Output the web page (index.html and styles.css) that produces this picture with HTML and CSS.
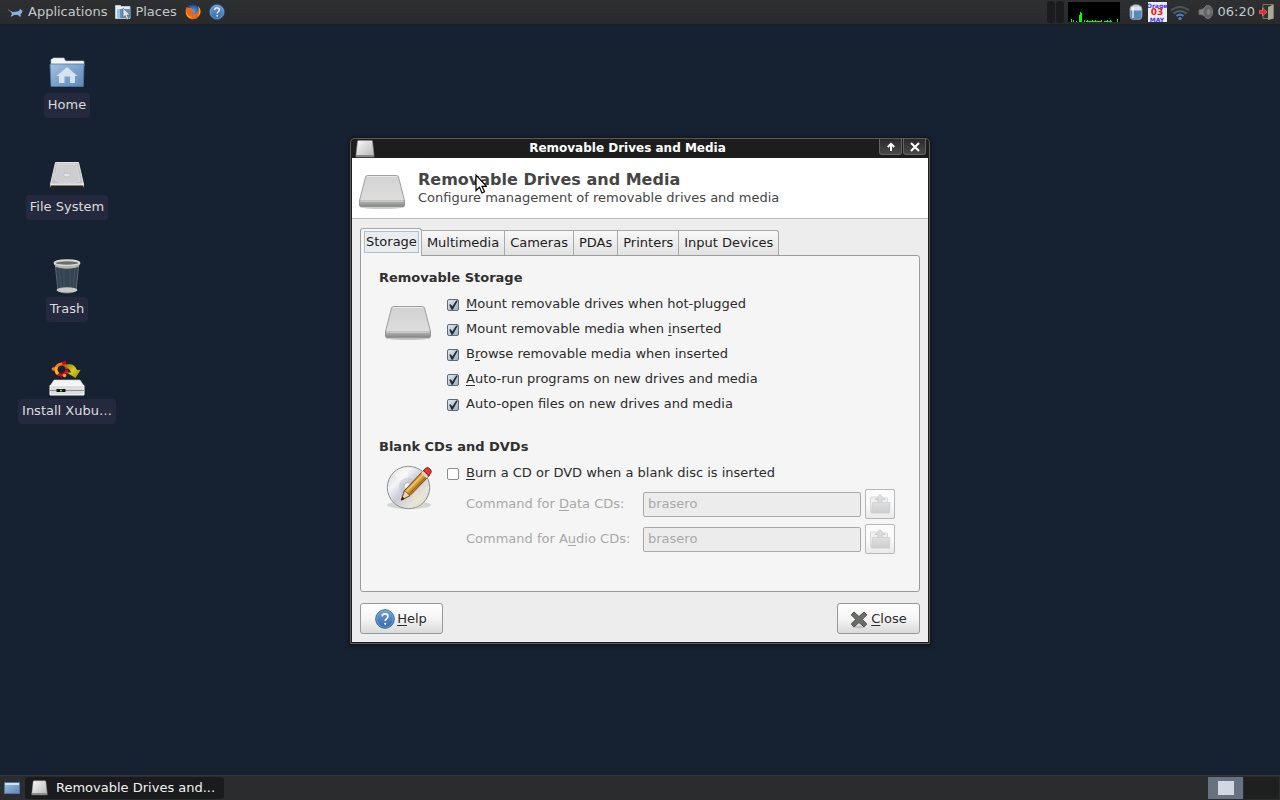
FILE: index.html
```
<!DOCTYPE html>
<html lang="en">
<head>
<meta charset="utf-8">
<title>Removable Drives and Media</title>
<link rel="stylesheet" href="styles.css">
</head>
<body>
<svg class="defs" aria-hidden="true">
  <defs>
    <linearGradient id="blue" x2="0" y2="1"><stop stop-color="#6fa3d6"/><stop offset="1" stop-color="#2f69a6"/></linearGradient>
    <linearGradient id="folder" x2="1" y2="1"><stop stop-color="#a6c4e0"/><stop offset=".5" stop-color="#7ba3cd"/><stop offset="1" stop-color="#5f88b5"/></linearGradient>
    <linearGradient id="metal" x2="0" y2="1"><stop stop-color="#d2d2d2"/><stop offset="1" stop-color="#e0e0e0"/></linearGradient>
    <linearGradient id="lip" x2="0" y2="1"><stop stop-color="#b9bab8"/><stop offset="1" stop-color="#858784"/></linearGradient>
    <linearGradient id="shine" x2="1" y2="1"><stop stop-color="#fafafa"/><stop offset="1" stop-color="#b5b5b5"/></linearGradient>
    <linearGradient id="disc" x2="1" y2="1"><stop stop-color="#c9cacc"/><stop offset=".3" stop-color="#f4f4f6"/><stop offset=".5" stop-color="#c9c9d8"/><stop offset=".75" stop-color="#e6e6dc"/><stop offset="1" stop-color="#c4c4c8"/></linearGradient>
    <linearGradient id="grey" x2="0" y2="1"><stop stop-color="#dedfe0"/><stop offset="1" stop-color="#cccecf"/></linearGradient>
    <linearGradient id="yellow" x2="1" y2="1"><stop stop-color="#7d7305"/><stop offset=".5" stop-color="#d9c91c"/><stop offset="1" stop-color="#998b08"/></linearGradient>
    <radialGradient id="fox"><stop stop-color="#5ba9e6"/><stop offset="1" stop-color="#17479a"/></radialGradient>
    <symbol id="drive" viewBox="0 0 48 38">
      <ellipse cx="24" cy="34" rx="22" ry="2" fill="#000" opacity=".2"/>
      <path d="M9.500 2.500h29q1.500 0 2 1.500l6 23.500v4.500q0 1.500-1.500 1.500H3q-1.500 0-1.500-1.500v-4.500L7.500 4q.5-1.500 2-1.500z" fill="url(#metal)" stroke="#a0a19f"/>
      <path d="M1.500 27.500h45v4.500q0 1.500-1.500 1.500H3q-1.500 0-1.500-1.500z" fill="url(#lip)" stroke="#8f918e" stroke-width=".6"/>
      <path d="M9 3.500h30M2.500 28h43" stroke="#eeeeee" stroke-width=".8"/>
    </symbol>
    <symbol id="minidrive" viewBox="0 0 20 18">
      <path d="M2.500 1.500Q2.500.5 3.500.5h13q1 0 1 1L19 15v2H1v-2z" fill="url(#shine)" stroke="#8b8b8b" stroke-width=".6"/>
      <path d="M1 15h18v2H1z" fill="#858683"/>
    </symbol>
    <symbol id="help" viewBox="0 0 20 20">
      <circle cx="10" cy="10" r="9.300" fill="url(#blue)" stroke="#34659a"/>
      <circle cx="10" cy="10" r="8.300" fill="none" stroke="#86b1db" stroke-width=".6"/>
      <path d="M7 7.300C7.200 5.500 8.400 4.900 10 4.900c1.800 0 3 .9 3 2.400 0 2.200-2.800 2.300-2.800 4.700" fill="none" stroke="#fff" stroke-width="1.600"/>
      <circle cx="10.200" cy="14.800" r="1.100" fill="#fff"/>
    </symbol>
    <symbol id="openfolder" viewBox="0 0 22 22">
      <path d="M1.500 19V5q0-1 1-1h5l1 1h9q1 0 1 1v13z" fill="#f0f0f0" stroke="#d9d9d9"/>
      <path d="M11 1.500l5 5h-3v4H9v-4H6z" fill="#dcdddc" stroke="#c4c5c4" stroke-width=".8"/>
      <path d="M3.500 9.500h17.500l-.5 10.500H2.500z" fill="url(#grey)" stroke="#cbcdce" stroke-width=".8"/>
    </symbol>
  </defs>
</svg>

<header class="panel panel-top">
  <nav class="menus">
    <button class="menu"><svg class="i16" viewBox="0 0 16 16"><path d="M2 6.500l3 1.500 4-.5 2.500-1 .5-2 1.200 1.500 1.300.5-.5 2.500-1.500 1 .5 2.500h-1.500L10 11H6l-2 1.500H2.500L4 10 3 8.500z" fill="#88aee2"/><path d="M0 5.500l4 3" stroke="#5d7ba8"/></svg>Applications</button>
    <button class="menu"><svg class="i16" viewBox="0 0 16 16"><path d="M.5 14.500V1.500h5l1 1h8.500v12z" fill="#e5edf3" stroke="#bdc8d0"/><path d="M2.500 14V5H15v9z" fill="#5c93c2"/><path d="M3 5h2v9H3z" fill="#9cc2e1"/><path d="M8 4v9.500l2.200-2 1.500 4 2-.8-1.600-3.700h3z" fill="#e4e4e4" stroke="#555" stroke-width=".6"/></svg>Places</button>
    <button class="menu" aria-label="Web browser"><svg class="i16" viewBox="0 0 16 16"><circle cx="8" cy="7.500" r="7" fill="url(#fox)"/><path d="M1.500 3Q0 6 .7 9.500C2 14 5.500 15.500 8.500 15.300c4-.3 7-3.600 7-7.500 0-2.500-1-4.300-2.500-5.600.8 2.500.6 6-2 7.300-2 1-4 .5-5-.8l2.500-.7 1-1.500-2.500-1-.5-1.500L3.500 4z" fill="#e96b17"/><path d="M13 2.200c2 3 2.200 7-.5 9.800 2.800-1.500 3.500-5 2.200-7.500zM1 7c1 4 3 6 6 6.500-3 1-6-2-6-6.500z" fill="#ffc42e"/></svg></button>
    <button class="menu" aria-label="Help"><svg class="i16"><use href="#help"/></svg></button>
  </nav>
  <div class="tray">
    <span class="handles"><i></i><i></i></span>
    <svg class="graph" viewBox="0 0 52 20"><path d="M0 0h52v20H0z" fill="#000"/><path d="M3.500 20v-3M5.500 20v-2M8.500 20v-1M11.500 20v-7M12.500 20V10M13.500 20v-9M16.500 20v-2M19.500 20v-2M21.500 20v-1M24.500 20v-2M27.500 20v-2M30.500 20v-1M33.500 20v-2M36.500 20v-1M39.500 20v-2M42.500 20v-2M49.500 20v-3M18 19.500h16M36 19.500h8" stroke="#0f0"/></svg>
    <svg class="i16 battery" viewBox="0 0 16 16"><rect x="2" y="1.500" width="12" height="14" rx="3.500" fill="#d9e2ea" stroke="#7f8b96" stroke-width=".8"/><path d="M2.500 6.500h11V12q0 3-3 3h-5q-3 0-3-3z" fill="#5787bd"/><path d="M4 3.500h2V14H4z" fill="#fff" opacity=".6"/><rect x="5" y=".5" width="6" height="2" rx="1" fill="#b9c3ca"/></svg>
    <span class="calendar"><b>Orage</b><strong>03</strong><b>MAY</b></span>
    <svg class="wifi" viewBox="0 0 20 20"><g fill="none" stroke-width="2"><path d="M1 8.500q9-7 18 0" stroke="#4b5359"/><path d="M3.500 11.500q6.500-5 13 0" stroke="#4d6277"/><path d="M6.500 14q3.500-2.800 7 0" stroke="#4b7fb5"/></g><circle cx="10" cy="16.500" r="1.600" fill="#4b8bca"/></svg>
    <svg class="i16 speaker" viewBox="0 0 16 16"><path d="M1 6l4-1 4-3.500 1 13-5-3.500-4-.5z" fill="#85878a" stroke="#66696b"/><ellipse cx="10" cy="8" rx="4.500" ry="6.500" fill="#606264" stroke="#7d7f81"/><ellipse cx="10.500" cy="8" rx="2" ry="3" fill="#808284"/></svg>
    <time>06:20</time>
    <button class="menu" aria-label="Quit"><svg class="i16" viewBox="0 0 16 16"><path d="M4 .5h10v14H4z" fill="#31312d" stroke="#77766c"/><path d="M9 3l5.500-2.500v14L9 16z" fill="#aaa998"/><path d="M.5 6.500h3V4L8 8l-4.500 4V9.500h-3z" fill="#e02929" stroke="#f88" stroke-width=".6"/></svg></button>
  </div>
</header>

<main class="desktop">
  <nav class="shortcuts">
    <a class="shortcut" href="#home"><svg class="picture" viewBox="0 0 36 36"><path d="M2 10V5q0-1 1-1h1V3h11l1.500 3H34q1 0 1 1v4z" fill="#f5f5f3" stroke="#c8cbcc" stroke-width=".6"/><path d="M1 9h34l-.7 22.500H2z" fill="url(#folder)" stroke="#5379a3" stroke-width=".8"/><path d="M18 12l10.500 9H26v7h-5v-6.500h-5.500V28H10v-7H7.500z" fill="#d6e2ed"/></svg><span>Home</span></a>
    <a class="shortcut" href="#filesystem"><svg class="picture" viewBox="0 0 36 36"><path d="M6.500 5.500h23L34.500 27v3H1.500v-3z" fill="#c5c5c5" stroke="#eee" stroke-width=".9"/><path d="M9 7h18l1.500 6 2.500 11q-7 3-16 2Q5 25 5 19q1-3 3-5-1-3 1-7z" fill="#cecece" stroke="#e0e0e0" stroke-width=".7"/><ellipse cx="18" cy="18" rx="3.500" ry="2" fill="#e4e4e4" stroke="#b4b4b4" stroke-width=".7"/><path d="M1.500 26.500h33v2h-33z" fill="#e4e4e4"/><path d="M1.500 28.500h33V31q0 1-1 1h-31q-1 0-1-1z" fill="#222"/></svg><span>File System</span></a>
    <a class="shortcut" href="#trash"><svg class="picture" viewBox="0 0 36 36"><path d="M6 4h24l-3 28q-9 4.500-18 0z" fill="#354453" stroke="#6d7880" stroke-width=".7"/><path d="M10 8l2 22M15 9v22M21 9v22M26 8l-2 22" stroke="#425260"/><ellipse cx="18" cy="31" rx="10.500" ry="2.800" fill="#c8cac6"/><ellipse cx="18" cy="4" rx="12.500" ry="2.800" fill="#6c6e6b" stroke="#d9dad6" stroke-width="2"/><path d="M6 5.500l.5 2.500q11.500 3.500 23 0l.5-2.500q-12 4-24 0z" fill="#b4b6b1"/></svg><span>Trash</span></a>
    <a class="shortcut" href="#install"><svg class="picture" viewBox="0 0 36 36"><g fill="none" stroke-width="3"><path d="M7 8a5.500 5.500 0 0 1 6-5" stroke="#f47b12"/><path d="M13 3a5.500 5.500 0 0 1 5 5" stroke="#df2c1b"/><path d="M18 9a6 6 0 0 1-11 2" stroke="#d30d16"/><path d="M7 6q-1 4 2 7" stroke="#ffb414"/></g><circle cx="4.500" cy="8" r="1.800" fill="#f47b12"/><circle cx="15.500" cy="1.800" r="1.800" fill="#d01"/><circle cx="15.500" cy="14.500" r="1.800" fill="#f9a51a"/><path d="M14 5q10-5.500 14 4h3.500L26.500 17l-9-5.500H22Q20 6 14 5z" fill="url(#yellow)"/><path d="M5 19h26l4 6H1z" fill="#f4f4f4" stroke="#ccc" stroke-width=".6"/><path d="M1 24.500h34V34H1z" fill="#dcdddf" stroke="#fafafa"/><path d="M1 29.500h34" stroke="#777" stroke-width=".8"/><path d="M7.500 28h9v3h-9z" fill="#141414"/><circle cx="12" cy="29.500" r="1" fill="#7f3"/></svg><span>Install Xubu…</span></a>
  </nav>

  <section class="window" aria-label="Removable Drives and Media">
    <div class="titlebar">
      <svg class="title-icon"><use href="#minidrive"/></svg>
      <h1>Removable Drives and Media</h1>
      <div class="controls">
        <button aria-label="Shade"><svg viewBox="0 0 12 12"><path d="M6 10V3.500M2.800 6L6 2.800 9.200 6" fill="none" stroke="#fff" stroke-width="2"/></svg></button>
        <button aria-label="Close window"><svg viewBox="0 0 12 12"><path d="M2 2l8 8M10 2l-8 8" stroke="#fff" stroke-width="2"/></svg></button>
      </div>
    </div>
    <div class="banner">
      <svg class="drive"><use href="#drive"/></svg>
      <div class="banner-text"><h2>Removable Drives and Media</h2><p>Configure management of removable drives and media</p></div>
      <svg class="pointer" viewBox="0 0 12 20"><path d="M1 1v15.500l3.500-3.300L7 19l2.500-1.200L7 12.300h4.500z" fill="#fff" stroke="#000" stroke-width="1.200"/></svg>
    </div>
    <div class="content">
      <div class="tabs" role="tablist">
        <button class="tab active" role="tab" aria-selected="true"><span>Storage</span></button>
        <button class="tab" role="tab">Multimedia</button>
        <button class="tab" role="tab">Cameras</button>
        <button class="tab" role="tab">PDAs</button>
        <button class="tab" role="tab">Printers</button>
        <button class="tab" role="tab">Input Devices</button>
      </div>
      <form class="page">
        <h3>Removable Storage</h3>
        <div class="group">
          <svg class="drive"><use href="#drive"/></svg>
          <div class="options">
            <label class="option"><input type="checkbox" checked><span><u>M</u>ount removable drives when hot-plugged</span></label>
            <label class="option"><input type="checkbox" checked><span>Mount removable media when <u>i</u>nserted</span></label>
            <label class="option"><input type="checkbox" checked><span>B<u>r</u>owse removable media when inserted</span></label>
            <label class="option"><input type="checkbox" checked><span><u>A</u>uto-run programs on new drives and media</span></label>
            <label class="option"><input type="checkbox" checked><span>Auto-open files on new drives and media</span></label>
          </div>
        </div>
        <h3>Blank CDs and DVDs</h3>
        <div class="group">
          <svg class="burn" viewBox="0 0 48 48"><ellipse cx="24" cy="41" rx="22" ry="4" fill="#000" opacity=".13"/><circle cx="23.500" cy="23.500" r="21.200" fill="url(#disc)" stroke="#8b8d90"/><path d="M23 23L8 10q6-7 15-7z" fill="#fff" opacity=".45"/><path d="M24 24l18 8q-4 9-12 12z" fill="#e8e6c5" opacity=".5"/><circle cx="23" cy="22.500" r="9" fill="#b8b8cb" opacity=".45"/><circle cx="23" cy="22.500" r="4" fill="#f5f5f5" stroke="#aaa" stroke-width=".8"/><path d="M16.500 36l3-9.500L39 6l5.500 5.500L25 31.500z" fill="#d69a35" stroke="#6b4410"/><path d="M21 28L40 8.500" stroke="#f5c673" stroke-width="1.500"/><path d="M23.500 30.500L43 11" stroke="#99641b" stroke-width="1.300"/><path d="M16.500 36l3-9.500 5.500 5z" fill="#ead7ae" stroke="#6b4410" stroke-width=".8"/><path d="M16 36.500l1.200-4 2.700 2.500z" fill="#222"/><path d="M37 8l5.500 5.500" stroke="#d3d3d3" stroke-width="2.500"/><path d="M38.500 6.500l2.200-2.300q2-1.500 4.300.8t.7 4.300l-2 2.200z" fill="#e33636" stroke="#9d1717"/></svg>
          <div class="options">
            <label class="option"><input type="checkbox"><span><u>B</u>urn a CD or DVD when a blank disc is inserted</span></label>
            <div class="command"><label for="data">Command for <u>D</u>ata CDs:</label><input id="data" type="text" value="brasero" disabled><button type="button" disabled aria-label="Browse for data CD command"><svg><use href="#openfolder"/></svg></button></div>
            <div class="command"><label for="audio">Command for A<u>u</u>dio CDs:</label><input id="audio" type="text" value="brasero" disabled><button type="button" disabled aria-label="Browse for audio CD command"><svg><use href="#openfolder"/></svg></button></div>
          </div>
        </div>
      </form>
      <div class="actions">
        <button class="action"><svg><use href="#help"/></svg><span><u>H</u>elp</span></button>
        <button class="action"><svg viewBox="0 0 20 20"><ellipse cx="10" cy="18" rx="7" ry="1.500" opacity=".15"/><path d="M5 3l5 4.500L15 3l2.800 2.800-4.600 4.700 4.600 4.500-2.800 2.800-5-4.300-5 4.300L2.200 15l4.600-4.500-4.600-4.700z" fill="#6b6d6a" stroke="#4c4e4b" stroke-linejoin="round"/></svg><span><u>C</u>lose</span></button>
      </div>
    </div>
  </section>
</main>

<footer class="panel panel-bottom">
  <button class="show-desktop" aria-label="Show desktop"><svg viewBox="0 0 16 12"><path d="M.5.500h15v11H.5z" fill="url(#folder)" stroke="#4f78a6"/><path d="M1 1h14v2H1z" fill="#d2e0ed"/></svg></button>
  <button class="task"><svg><use href="#minidrive"/></svg>Removable Drives and...</button>
  <div class="pager"><button class="workspace current" aria-label="Workspace 1"><i></i></button><button class="workspace" aria-label="Workspace 2"></button></div>
</footer>
</body>
</html>
```
FILE: styles.css
```
* { box-sizing: border-box; }
body {
  margin: 0;
  min-height: 100vh;
  display: flex;
  flex-direction: column;
  background: #162232;
  color: #2b2b2b;
  font: 13px/16px "DejaVu Sans", sans-serif;
}
h1, h2, h3, p { margin: 0; }
button { font: inherit; color: inherit; margin: 0; padding: 0; border: 0; background: none; }
svg { display: block; flex: none; }
u { text-underline-offset: 2px; text-decoration-thickness: 1px; text-decoration-skip-ink: none; }
.defs { position: absolute; width: 0; height: 0; }
.i16 { width: 16px; height: 16px; }

.panel { display: flex; align-items: center; color: #c3c8cb; }
.panel-top {
  height: 25px;
  justify-content: space-between;
  padding: 0 5px 0 8px;
  background: linear-gradient(#2e2f30, #292a2b);
  border-bottom: 1px solid #1c1f22;
}
.menus, .tray { display: flex; align-items: center; }
.menus { gap: 8px; }
.menu { display: flex; align-items: center; gap: 4px; }
.handles { display: flex; gap: 1px; margin-right: 4px; }
.handles i { width: 8px; height: 22px; border-radius: 3px; background: #1b1c1d; }
.graph { width: 52px; height: 20px; margin-right: 8px; }
.battery { margin-right: 4px; }
.calendar {
  width: 19px;
  height: 20px;
  display: flex;
  flex-direction: column;
  align-items: center;
  justify-content: center;
  overflow: hidden;
  background: #efefef;
  color: #3838f0;
  font-size: 6px;
  line-height: 5px;
  margin-right: 3px;
}
.calendar strong { color: #f01818; font-size: 9px; line-height: 9px; }
.wifi { width: 20px; height: 20px; margin-right: 8px; }
.speaker { margin-right: 4px; }
.tray time { margin-right: 4px; }

.desktop {
  flex: 1;
  display: grid;
  grid-template-columns: 134px 1fr 134px;
  align-items: start;
}
.shortcuts { display: flex; flex-direction: column; gap: 38px; padding-top: 30px; }
.shortcut {
  height: 64px;
  display: flex;
  flex-direction: column;
  align-items: center;
  gap: 2px;
  color: #dcdcdc;
  text-decoration: none;
}
.picture { width: 36px; height: 36px; }
.shortcut span { padding: 4px 4px 5px; border-radius: 4px; background: #25293d; line-height: 16px; }

.window {
  justify-self: center;
  width: 100%;
  max-width: 580px;
  margin-top: 113px;
  padding: 0 1px 1px;
  background: #1d1d1d;
  border: 1px solid #5c5c58;
  border-radius: 4px 4px 0 0;
  outline: 1px solid #171717;
  box-shadow: 0 1px 4px 1px rgb(0 0 0 / 40%);
}
.titlebar {
  height: 19px;
  display: grid;
  grid-template-columns: 27px 1fr 52px;
  align-items: center;
  color: #fff;
}
.title-icon { width: 20px; height: 18px; margin-left: 3px; }
.titlebar h1 { padding-bottom: 2px; font-size: 12px; line-height: 16px; text-align: center; }
.controls { display: flex; gap: 1px; align-self: start; justify-content: end; padding-right: 2px; }
.controls button {
  width: 23px;
  height: 16px;
  display: grid;
  place-items: center;
  border: 1px solid #636363;
  border-top: 0;
  border-radius: 0 0 3px 3px;
  background: linear-gradient(#2b2b2b, #484848);
}
.controls svg { width: 12px; height: 12px; }
.banner {
  position: relative;
  display: flex;
  align-items: center;
  gap: 12px;
  height: 61px;
  padding: 8px 6px 0;
  background: #fff;
  border-bottom: 1px solid #bcbcbc;
  color: #454545;
}
.drive { width: 48px; height: 38px; }
.banner-text { align-self: start; padding-top: 4px; }
.banner h2 { font-size: 16px; line-height: 20px; }
.banner p { line-height: 16px; }
.pointer { position: absolute; left: 123px; top: 16px; width: 12px; height: 20px; }
.content { padding: 9px 8px 8px; background: #ededed; }

.tabs { display: flex; align-items: flex-end; }
.tab {
  height: 25px;
  padding: 0 5px;
  border: 1px solid #a9a9a9;
  border-left: 0;
  border-bottom: 0;
  background: linear-gradient(#f8f8f8, #e2e2e2);
  color: #1c1c1c;
}
.tab:last-child { border-radius: 0 3px 0 0; }
.tab.active {
  height: 28px;
  margin-bottom: -1px;
  padding: 0 2px 1px 3px;
  border-left: 1px solid #9b9b9b;
  border-radius: 3px 3px 0 0;
  background: #f5f5f5;
  z-index: 1;
}
.tab span { display: block; padding: 2px 1px; border: 1px solid #b0bfcc; background: #eaedef; }
.page {
  display: block;
  min-height: 337px;
  padding: 14px 24px 0 18px;
  border: 1px solid #9b9b9b;
  border-radius: 0 3px 3px 3px;
  background: #f5f5f5;
}
.page h3 { font-size: 13px; line-height: 16px; color: #303030; }
.group { display: flex; align-items: flex-start; padding: 6px 0 0 5px; }
.group .drive { margin: 12px 15px 0 0; }
.group .burn { width: 48px; height: 48px; margin: 3px 14px 0 1px; }
.options { flex: 1; }
.group + h3 { margin-top: 22px; }
.option { display: flex; align-items: center; gap: 7px; height: 25px; }
.option span { padding-bottom: 2px; }
.option input {
  appearance: none;
  width: 12px;
  height: 12px;
  margin: 1px 0 0;
  display: grid;
  border: 1px solid #8c8c8c;
  border-radius: 2px;
  background: #fff;
}
.option input:checked { border-color: #5c6b7b; background: linear-gradient(135deg, #dfe7ee, #9cb0c4); }
.option input:checked::after {
  content: "";
  background: #262b30;
  clip-path: polygon(12% 48%, 28% 43%, 43% 65%, 82% 6%, 98% 8%, 48% 98%, 35% 98%);
}
.command {
  display: grid;
  grid-template-columns: 173px 1fr 30px;
  align-items: center;
  column-gap: 4px;
  margin: 3px 0 5px 19px;
  color: #a8a8a8;
}
.command input {
  width: 100%;
  min-width: 0;
  height: 25px;
  padding: 0 4px 2px;
  border: 1px solid #a9a9a9;
  border-radius: 2px;
  background: #ececec;
  color: #a8a8a8;
  font: inherit;
}
.command button {
  height: 30px;
  display: grid;
  place-items: center;
  border: 1px solid #b7b7b7;
  border-radius: 2px;
  background: linear-gradient(#fbfbfb 50%, #e9e9e9);
}
.command svg { width: 22px; height: 22px; }
.actions { display: flex; justify-content: space-between; padding-top: 11px; }
.action {
  width: 83px;
  height: 31px;
  display: flex;
  align-items: center;
  justify-content: center;
  gap: 2px;
  padding-right: 1px;
  border: 1px solid #989898;
  border-radius: 3px;
  background: linear-gradient(#fff, #f5f5f5 50%, #dadada);
}
.action svg { width: 20px; height: 20px; }

.panel-bottom { height: 25px; padding: 0 1px 0 4px; background: #2b2c2d; border-top: 1px solid #343637; }
.show-desktop svg { width: 16px; height: 12px; }
.task {
  width: 199px;
  height: 22px;
  display: flex;
  align-items: center;
  gap: 8px;
  margin-left: 5px;
  padding-left: 6px;
  border-radius: 3px;
  background: #1a1b1d;
  color: #f2f2f2;
}
.task svg { width: 17px; height: 16px; }
.pager { display: flex; gap: 1px; margin-left: auto; }
.workspace { width: 35px; height: 22px; display: grid; place-items: center; background: #1e201f; }
.workspace.current { background: #66727f; }
.workspace i { width: 16px; height: 14px; background: #d0d9e2; }
```
